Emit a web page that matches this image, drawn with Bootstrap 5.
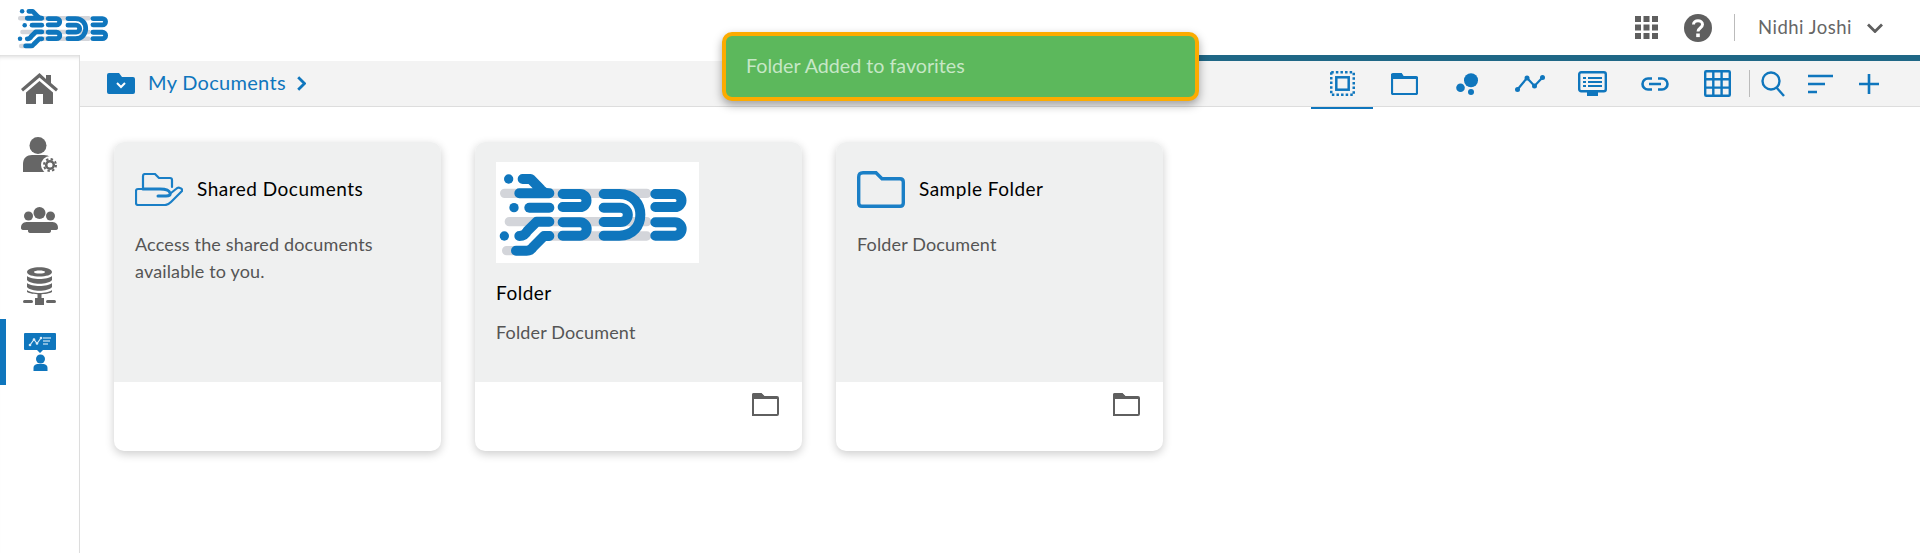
<!DOCTYPE html>
<html lang="en">

<head>
    <meta charset="UTF-8">
    <meta name="viewport" content="width=device-width, initial-scale=1.0">
    <title>My Documents</title>
    <link href="https://cdn.jsdelivr.net/npm/bootstrap@5.3.2/dist/css/bootstrap.min.css" rel="stylesheet">
    <style>
        body {
            font-family: "Lato", "Noto Sans", sans-serif;
            color: #555;
            height: 553px;
            overflow: hidden;
            background: #fff;
        }
        .top-head { height: 55px; padding-left: 16px; padding-right: 37px; }
        .top-logo { width: 98px; height: 49px; }
        .head-help { margin-left: 26px; margin-right: 22px; }
        .head-sep { width: 1px; height: 27px; background: #bbb; margin-right: 23px; }
        .user-name { font-size: 18.5px; color: #666; letter-spacing: .5px; margin-right: 15px; }
        .app-body { height: 498px; }
        .side-nav { width: 80px; border-right: 1px solid #ddd; box-shadow: inset 0 5px 5px -4px rgba(0,0,0,.2); }
        .side-item { height: 66px; }
        .side-item.is-active { box-shadow: inset 6px 0 0 #0f76bd; }
        .progress-line { height: 6px; background: #1f6786; width: 920px; }
        .tool-bar { height: 46px; background: #f3f3f3; border-bottom: 1px solid #ddd; padding-left: 27px; padding-right: 41px; }
        .crumb-text { color: #0f76bd; font-size: 20px; letter-spacing: .3px; margin-left: 13px; margin-right: 11px; padding-bottom: 4px; }
        .tool-tab { width: 62.6px; height: 47px; position: relative; }
        .tool-tab.is-active::after { content: ""; position: absolute; left: 0; right: 0; bottom: -2px; height: 2px; background: #0f76bd; }
        .tool-sep { width: 1px; height: 27px; background: #bbb; margin-right: 11px; }
        .tool-sort { margin-left: 23px; }
        .tool-plus { margin-left: 26px; }
        .doc-area { padding: 35px 34px; gap: 34px; }
        .doc-card { width: 327px; height: 309px; border-radius: 10px; overflow: hidden; background: #fff; box-shadow: 0 3px 10px rgba(0,0,0,.2); }
        .doc-top { height: 240px; background: #eff0f0; padding: 20px 21px; }
        .doc-head { height: 54px; gap: 14px; margin-bottom: 15px; }
        .doc-foot { height: 69px; padding: 11px 23px; }
        .doc-title { color: #000; font-size: 19px; margin: 0; font-weight: 400; letter-spacing: .5px; }
        .doc-title-below { margin-top: 19px; margin-bottom: 14px; }
        .doc-desc { font-size: 18px; line-height: 27px; color: #555; margin: 0; letter-spacing: .15px; }
        .doc-thumb { width: 203px; height: 101px; background: #fff; display: block; }
        .toast-msg { position: absolute; left: 722px; top: 32px; width: 477px; height: 69px; background: #5cb85c; border: 4px solid #fcab00; border-radius: 10px; box-shadow: 0 4px 10px rgba(0,0,0,.35); padding-left: 20px; padding-bottom: 2px; color: #c6e7c6; font-size: 19.7px; }
    </style>
</head>

<body>
    <svg width="0" height="0" class="d-block">
        <symbol id="bdb-logo" viewBox="78 96 609 303">
            <g fill="none" stroke="#d3d5da" stroke-width="28" stroke-linecap="round">
                <path d="M104 190H530M118 275H530M240 318H530M110 362H180"/>
            </g>
            <g fill="#0f76bd">
                <circle cx="116" cy="147" r="14"/><circle cx="132" cy="233" r="14"/><circle cx="103" cy="318" r="14"/>
            </g>
            <g fill="none" stroke="#0f76bd" stroke-width="30" stroke-linecap="round" stroke-linejoin="round">
                <path d="M158 147H182L212 178Q222 190 238 190H148"/>
                <path d="M178 233H238"/>
                <path d="M238 275H200L172 303Q165 318 148 318"/>
                <path d="M238 318H222L190 350Q182 362 170 362H138"/>
                <path d="M278 192H330A19.5 19.5 0 0 1 330 231H278"/>
                <path d="M278 277H330A20 20 0 0 1 330 317H278"/>
                <path d="M401 192H448C490 192 511 222 511 254S490 317 448 317H401"/>
                <path d="M401 233H452A21.5 21.5 0 0 1 452 276H401"/>
                <path d="M556 192H615A19.5 19.5 0 0 1 615 231H556"/>
                <path d="M556 277H615A20 20 0 0 1 615 317H556"/>
            </g>
        </symbol>
        <symbol id="foot-folder" viewBox="0 0 27 23">
            <path d="M1 22V2Q1 1 2 1H9L12 4H25Q26 4 26 5V21Q26 22 25 22Z" fill="none" stroke="#5f5f5f" stroke-width="2"/>
            <path d="M0 6V2Q0 0 2 0H9L13 4H25V6Z" fill="#5f5f5f"/>
        </symbol>
    </svg>

    <!-- top header -->
    <header class="top-head d-flex align-items-center">
        <svg class="top-logo"><use href="#bdb-logo"/></svg>
        <div class="ms-auto d-flex align-items-center">
            <svg width="23" height="23" viewBox="0 0 23 23" fill="#5f5f5f">
                <rect width="6" height="6"/><rect x="8.5" width="6" height="6"/><rect x="17" width="6" height="6"/>
                <rect y="8.5" width="6" height="6"/><rect x="8.5" y="8.5" width="6" height="6"/><rect x="17" y="8.5" width="6" height="6"/>
                <rect y="17" width="6" height="6"/><rect x="8.5" y="17" width="6" height="6"/><rect x="17" y="17" width="6" height="6"/>
            </svg>
            <svg width="28" height="28" viewBox="0 0 28 28" class="head-help">
                <circle cx="14" cy="14" r="14" fill="#5f5f5f"/>
                <path d="M9.5 10.5C9.5 5.5 18.5 5.5 18.5 10.5C18.5 14 14 14 14 17.5" fill="none" stroke="#fff" stroke-width="3"/>
                <rect x="12.2" y="19.5" width="3.6" height="3.6" fill="#fff"/>
            </svg>
            <div class="head-sep"></div>
            <span class="user-name">Nidhi Joshi</span>
            <svg width="16" height="10" viewBox="0 0 16 10"><path d="M1 1.5L8 8.5L15 1.5" fill="none" stroke="#5f5f5f" stroke-width="2.8"/></svg>
        </div>
    </header>

    <div class="app-body d-flex">
        <!-- side menu -->
        <nav class="side-nav flex-shrink-0 d-flex flex-column">
            <a class="side-item d-flex align-items-center justify-content-center" href="#">
                <svg width="37" height="31" viewBox="0 0 37 31" fill="#666">
                    <path d="M18.5 0L0 16L2 18.5L18.5 4.5L35 18.5L37 16L30 10V2H25V6Z"/>
                    <path d="M5 19.5L18.5 8L32 19.5V31H22V21H15V31H5Z"/>
                </svg>
            </a>
            <a class="side-item d-flex align-items-center justify-content-center" href="#">
                <svg width="34" height="35" viewBox="0 0 34 35" fill="#666">
                    <circle cx="15" cy="8.5" r="8.5"/>
                    <path d="M0 35V27C0 21 4 18 9 18H21C26 18 30 21 30 27V35Z"/>
                    <circle cx="27" cy="28" r="9" fill="#fff"/>
                    <circle cx="27" cy="28" r="3.8" fill="none" stroke="#666" stroke-width="2.6"/>
                    <circle cx="27" cy="28" r="6" fill="none" stroke="#666" stroke-width="2" stroke-dasharray="2.4 2.3"/>
                </svg>
            </a>
            <a class="side-item d-flex align-items-center justify-content-center" href="#">
                <svg width="37" height="26" viewBox="0 0 37 26" fill="#666">
                    <circle cx="7.5" cy="9" r="4.5"/><circle cx="18.5" cy="6" r="6"/><circle cx="29.5" cy="9" r="4.5"/>
                    <path d="M0 21C0 16 3 15 7 15H30C34 15 37 16 37 21Q37 23 34 23H30V24Q30 26 27 26H10Q7 26 7 24V23H3Q0 23 0 21Z"/>
                </svg>
            </a>
            <a class="side-item d-flex align-items-center justify-content-center" href="#">
                <svg width="33" height="38" viewBox="0 0 33 38" fill="#666">
                    <path d="M4 5C4 -1.5 29 -1.5 29 5C29 11 4 11 4 5ZM11 5C11 7 22 7 22 5C22 3 11 3 11 5Z" fill-rule="evenodd"/>
                    <path d="M4 9C8 13 25 13 29 9V13C25 18 8 18 4 13Z"/>
                    <path d="M4 16C8 20 25 20 29 16V20C25 25 8 25 4 20Z"/>
                    <path d="M4 23C8 27 25 27 29 23V25C25 28 8 28 4 25Z"/>
                    <rect x="14.5" y="27" width="4" height="5"/>
                    <rect x="12" y="31" width="9" height="7"/>
                    <rect x="0" y="33" width="10" height="3" rx="1.5"/>
                    <rect x="23" y="33" width="10" height="3" rx="1.5"/>
                </svg>
            </a>
            <a class="side-item is-active d-flex align-items-center justify-content-center" href="#">
                <svg width="32" height="38" viewBox="0 0 32 38" fill="#0f76bd">
                    <path d="M1 0H31Q32 0 32 1V16Q32 17 31 17H19L16 20L13 17H1Q0 17 0 16V1Q0 0 1 0Z"/>
                    <path d="M6 12L10 6.5L13 10.5L17 5" fill="none" stroke="#dcecf7" stroke-width="1.2"/>
                    <g fill="#dcecf7"><circle cx="6" cy="12" r="1.3"/><circle cx="10" cy="6.5" r="1.3"/><circle cx="13" cy="10.5" r="1.3"/><circle cx="17" cy="5" r="1.3"/></g>
                    <path d="M19 5H27M19 8H26M19 11H24" fill="none" stroke="#a9cfe9" stroke-width="1.4"/>
                    <circle cx="16.5" cy="26" r="4.5"/>
                    <path d="M9.5 38V35C9.5 32 12 31 14 31H19C21 31 23.5 32 23.5 35V38Z"/>
                </svg>
            </a>
        </nav>

        <main class="flex-grow-1 d-flex flex-column">
            <div class="progress-line ms-auto"></div>
            <div class="tool-bar d-flex align-items-center">
                <svg width="28" height="21" viewBox="0 0 28 21" fill="#0f76bd">
                    <path d="M2 0H12L15 4H26Q28 4 28 6V19Q28 21 26 21H2Q0 21 0 19V2Q0 0 2 0Z"/>
                    <path d="M10 10L14 14L18 10" fill="none" stroke="#fff" stroke-width="2"/>
                </svg>
                <span class="crumb-text">My Documents</span>
                <svg width="9" height="15" viewBox="0 0 9 15"><path d="M1.2 1.2L7.5 7.5L1.2 13.8" fill="none" stroke="#0f76bd" stroke-width="2.8"/></svg>

                <div class="ms-auto d-flex align-items-center">
                    <div class="tool-tab is-active d-flex align-items-center justify-content-center">
                        <svg width="25" height="25" viewBox="0 0 25 25" fill="none" stroke="#0f76bd">
                            <rect x="1.25" y="1.25" width="22.5" height="22.5" stroke-width="2.5" stroke-dasharray="2.5 2.1"/>
                            <rect x="6.3" y="6.3" width="12.4" height="12.4" stroke-width="2.5"/>
                        </svg>
                    </div>
                    <div class="tool-tab d-flex align-items-center justify-content-center">
                        <svg width="27" height="22" viewBox="0 0 27 22">
                            <path d="M1 20V2L10 1L12 4H25Q26 4 26 5V20Q26 21 25 21H2Q1 21 1 20Z" fill="none" stroke="#0f76bd" stroke-width="2.2"/>
                            <path d="M0 6V2Q0 0 2 0H10L13 4H26V6Z" fill="#0f76bd"/>
                        </svg>
                    </div>
                    <div class="tool-tab d-flex align-items-center justify-content-center">
                        <svg width="22" height="22" viewBox="0 0 22 22" fill="#0f76bd">
                            <circle cx="15" cy="7.2" r="7"/><circle cx="4.5" cy="14.7" r="4.3"/><circle cx="15" cy="19" r="3"/>
                        </svg>
                    </div>
                    <div class="tool-tab d-flex align-items-center justify-content-center">
                        <svg width="30" height="17" viewBox="0 0 30 17" fill="#0f76bd">
                            <path d="M2.5 14.5L12 3L19.5 11L27.5 2.5" fill="none" stroke="#0f76bd" stroke-width="2.2"/>
                            <circle cx="2.5" cy="14.5" r="2.5"/><circle cx="12" cy="3" r="2.5"/><circle cx="19.5" cy="11" r="2.5"/><circle cx="27.5" cy="2.5" r="2.5"/>
                        </svg>
                    </div>
                    <div class="tool-tab d-flex align-items-center justify-content-center">
                        <svg width="29" height="25" viewBox="0 0 29 25" fill="#0f76bd">
                            <rect x="1.2" y="1.2" width="26.6" height="19" rx="2" fill="none" stroke="#0f76bd" stroke-width="2.4"/>
                            <path d="M9 21H20V25H9Z"/>
                            <path d="M5 7H8M10 7H24M5 11H8M10 11H24M5 15H8M10 15H24" stroke="#0f76bd" stroke-width="2.2"/>
                        </svg>
                    </div>
                    <div class="tool-tab d-flex align-items-center justify-content-center">
                        <svg width="28" height="14" viewBox="0 0 28 14" fill="none" stroke="#0f76bd" stroke-width="2.6">
                            <path d="M11 1.5H7A5.5 5.5 0 0 0 7 12.5H11M17 1.5H21A5.5 5.5 0 0 1 21 12.5H17M8 7H20"/>
                        </svg>
                    </div>
                    <div class="tool-tab d-flex align-items-center justify-content-center">
                        <svg width="27" height="27" viewBox="0 0 27 27" fill="none" stroke="#0f76bd" stroke-width="2.4">
                            <rect x="1.2" y="1.2" width="24.6" height="24.6" rx="1"/>
                            <path d="M9.3 1V26M17.6 1V26M1 9.3H26M1 17.6H26"/>
                        </svg>
                    </div>
                    <div class="tool-sep"></div>
                    <svg width="24" height="26" viewBox="0 0 24 26" fill="none" stroke="#0f76bd" stroke-width="2.4">
                        <circle cx="10" cy="10" r="8.5"/><path d="M15.5 16.5L23 25"/>
                    </svg>
                    <svg width="25" height="22" viewBox="0 0 25 22" stroke="#0f76bd" stroke-width="2.6" class="tool-sort">
                        <path d="M0 3H25M0 11H17M0 19H9"/>
                    </svg>
                    <svg width="20" height="20" viewBox="0 0 20 20" stroke="#0f76bd" stroke-width="2.6" class="tool-plus">
                        <path d="M0 10H20M10 0V20"/>
                    </svg>
                </div>
            </div>

            <!-- document cards -->
            <section class="doc-area d-flex align-items-start">
                <div class="doc-card">
                    <div class="doc-top">
                        <div class="doc-head d-flex align-items-center">
                            <svg width="48" height="33" viewBox="0 0 48 33" fill="none" stroke="#1a7fc6" stroke-width="2.2" stroke-linejoin="round" stroke-linecap="round">
                                <path d="M8 16V3Q8 1 10 1H20L24 5H35Q37 5 37 7V14"/>
                                <path d="M8 16H3Q1 16 1 18V30Q1 32 3 32H30Q33 32 36 29L47 18Q48 16 45 15Q43 14 41 16L36 20"/>
                                <path d="M8 16H25Q34 16 35 20Q36 23 31 23H23" stroke-width="3"/>
                            </svg>
                            <h6 class="doc-title">Shared Documents</h6>
                        </div>
                        <p class="doc-desc">Access the shared documents available to you.</p>
                    </div>
                    <div class="doc-foot"></div>
                </div>

                <div class="doc-card">
                    <div class="doc-top">
                        <svg class="doc-thumb"><use href="#bdb-logo"/></svg>
                        <h6 class="doc-title doc-title-below">Folder</h6>
                        <p class="doc-desc">Folder Document</p>
                    </div>
                    <div class="doc-foot d-flex justify-content-end">
                        <svg width="27" height="23"><use href="#foot-folder"/></svg>
                    </div>
                </div>

                <div class="doc-card">
                    <div class="doc-top">
                        <div class="doc-head d-flex align-items-center">
                            <svg width="48" height="37" viewBox="0 0 48 37" fill="none" stroke="#1a7fc6" stroke-width="3.4">
                                <path d="M1.7 32V6Q1.7 1.7 6 1.7H19L25 7.7H43Q46.3 7.7 46.3 11V32Q46.3 35.3 43 35.3H5Q1.7 35.3 1.7 32Z"/>
                            </svg>
                            <h6 class="doc-title">Sample Folder</h6>
                        </div>
                        <p class="doc-desc">Folder Document</p>
                    </div>
                    <div class="doc-foot d-flex justify-content-end">
                        <svg width="27" height="23"><use href="#foot-folder"/></svg>
                    </div>
                </div>
            </section>
        </main>
    </div>

    <div class="toast-msg d-flex align-items-center">Folder Added to favorites</div>

    <script src="https://cdn.jsdelivr.net/npm/bootstrap@5.3.2/dist/js/bootstrap.bundle.min.js"></script>
</body>

</html>
